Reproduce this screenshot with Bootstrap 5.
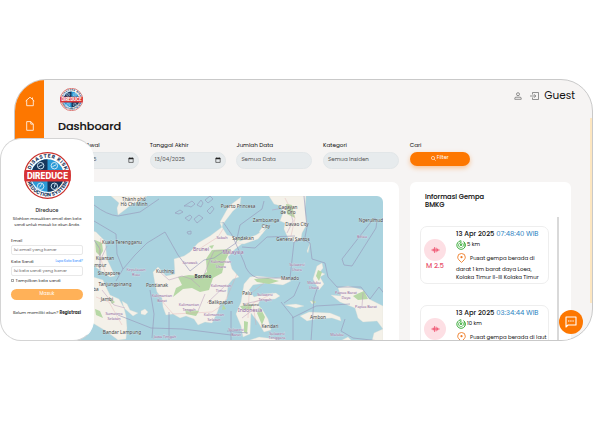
<!DOCTYPE html>
<html lang="id">
<head>
<meta charset="utf-8">
<meta name="viewport" content="width=device-width, initial-scale=1">
<title>Direduce Dashboard</title>
<link href="https://cdn.jsdelivr.net/npm/bootstrap@5.3.0/dist/css/bootstrap.min.css" rel="stylesheet">
<style>
body{font-family:Poppins,Inter,"Open Sans",sans-serif;color:#111;background:#fff;height:421px;padding-top:79px;font-size:6px;line-height:1.3;overflow:hidden}
svg{display:block;flex:none}
.shell{margin-left:14px;width:579px;height:262px;border:1px solid #c9c9c9;border-radius:32px;background:linear-gradient(#fde6c0,#fde6c0) right 38px/2px 185px no-repeat #f6f4f3}
.side{width:29px;background:#fd7700;padding-top:16px;gap:14px}
.main{padding-left:14px}
.topbar{height:36px;padding:4px 17px 0 2px}
.guest{font-size:10.500px;line-height:14px;margin-left:1px}
.title{font-size:11.300px;font-weight:500;letter-spacing:-.05px;line-height:18px;margin:1px 0 6px 0;-webkit-text-stroke:.15px #111}
.filters{display:grid;grid-template-columns:repeat(5,76px);column-gap:10.7px;margin-left:5px;height:41px}
.lbl{font-size:5.7px;line-height:9px;margin-bottom:1.5px;white-space:nowrap}
.first-lbl{margin-left:-2px}
.pill{height:17px;border-radius:9px;background:#e7ebed;border:1px solid #e2e6e8;font-size:5.5px;color:#555;padding:0 4px}
.pill .early{margin-left:-2px}
.filter-btn{width:60px;height:14px;margin-top:1px;border-radius:7px;background:#fd7700;color:#fff;font-size:5px;box-shadow:0 2px 5px #fd770066;gap:1px}
.panels{margin-left:5px;height:159px;gap:11px}
.map-panel{width:336px;border-radius:7px 7px 0 0;background:#fff;padding:14px 16px 0 10px}
.map-art{width:310px;height:145px;border-radius:6px 6px 0 0}
.info{width:161px;border-radius:6px 6px 0 0;background:#fff;padding:11px 12px 0 10px}
.info-title{font-size:6.7px;font-weight:500;line-height:8px;padding-left:5px;height:24px;-webkit-text-stroke:.1px #111}
.feed{border-right:2px solid #d9d9d9;padding:9px 8px 0 0;gap:21px;height:124px;overflow:hidden}
.quake{width:129px;height:58px;flex:none;border:1px solid #eee;border-radius:7px;padding:2px 0 0 2px}
.mag{width:24px;flex:none;padding-top:10px;font-size:7px;font-weight:500;color:#e8506b;white-space:nowrap}
.wave{width:22px;height:22px;border-radius:50%;background:#fddfe4;margin-bottom:3px}
.mag b{font-weight:500;position:relative;margin-top:-3px}
.detail{padding-left:9px;white-space:nowrap}
.when{font-size:6.8px;font-weight:500;line-height:9px}
.when span{color:#2982bf;font-weight:400}
.depth{font-size:5.4px;height:13px;gap:1px}
.place{font-size:5.45px;line-height:8px}
.place div:first-child{height:14px;gap:4px;padding-left:1px}
.login{left:0;top:138px;width:94px;height:203px;border-radius:21px;background:#fff;border:1px solid #d4d4d4;border-right-color:#fff;padding:13px 10px;font-size:4.200px;color:#333}
.brand{font-size:5.1px;font-weight:500;line-height:8px;margin-top:8px}
.intro{font-size:3.92px;line-height:6px;height:20px;white-space:nowrap;margin-top:1px}
.field{height:10px;border:1px solid #e8e8e8;border-radius:2px;padding-left:2px;font-size:4.2px;color:#666}
.flabel{font-size:4.2px;line-height:9px}
.flabel.second{margin-top:1.5px}
.forgot{font-size:3.2px;color:#2485ff}
.check{width:3px;height:3px;flex:none;border:1px solid #aaa}
.tick{gap:1.500px}
.submit{height:11px;border-radius:6px;background:#ffb158;color:#fff;font-size:4.6px;margin-top:4px}
.register{margin-top:10px}
.chat{left:559px;top:310px;width:24px;height:24px;background:#fd7700}
</style>
<script src="https://cdn.jsdelivr.net/npm/bootstrap@5.3.0/dist/js/bootstrap.bundle.min.js"></script>
</head>
<body>
<svg width="0" height="0" class="position-absolute"><defs>
<symbol id="logo" viewBox="0 0 48 48"><circle cx="24" cy="24" r="23.3" fill="#fff" stroke="#c9302c" stroke-width="1.3"/><circle cx="24" cy="24" r="16.6" fill="#2a9ad6"/><path d="M24 7.4A16.6 16.6 0 0 0 7.4 24H24zM24 24v16.6A16.6 16.6 0 0 0 40.6 24z" fill="#17375d"/><g fill="none" stroke="#cfe6f5"><circle cx="17" cy="14" r="3.3"/><circle cx="31" cy="14" r="3.3"/><circle cx="17" cy="35" r="3.3"/><circle cx="31" cy="35" r="3.3"/><path d="m15 15 4-2m10 2 4-2m-17 23 2-3m13 3 1-4"/></g><path id="arcT" d="M5.700 24a18.300 18.300 0 0 1 36.600 0" fill="none"/><path id="arcB" d="M2.600 24a21.400 21.400 0 0 0 42.800 0" fill="none"/><g font-family="Inter,sans-serif" font-weight="800" font-size="5" fill="#17375d"><text><textPath href="#arcT" startOffset="6" textLength="46">DISASTER RISK</textPath></text><text><textPath href="#arcB" startOffset="7" textLength="53">REDUCTION SYSTEM</textPath></text></g><rect x=".5" y="18.5" width="47" height="11.5" rx="1" fill="#d83235"/><text x="24" y="27.4" font-family="Inter,sans-serif" font-weight="800" font-size="8.6" text-anchor="middle" textLength="42" lengthAdjust="spacingAndGlyphs" fill="#fff">DIREDUCE</text></symbol>
<symbol id="cal" viewBox="0 0 6 6"><path d="M.8 1.1h4.400v4.300H.8zM1.800.3v1M4.200.3v1" fill="none" stroke="#222" stroke-width=".6"/><path d="M.8 1h4.400v1.200H.8z" fill="#222"/></symbol>
<symbol id="quakewave" viewBox="0 0 10 8"><path d="M.5 4h9M2.500 2.500v3M4 .8v6.400M5.700 1.500v5M7.300 2.500v3" fill="none" stroke="#ef5470" stroke-width="1"/></symbol>
<symbol id="radar" viewBox="0 0 10 10"><g fill="none" stroke="#28a428" stroke-linecap="round"><path d="M7.800 1.700A4.300 4.300 0 1 1 4.500.8" stroke-width=".9"/><path d="M6.700 3.200A2.500 2.500 0 1 1 4.500 2.600M5 5V1M8.500 3A4.300 4.300 0 0 1 9 6" stroke-width=".7"/></g><circle cx="5" cy="5" r=".9" fill="#28a428"/></symbol>
<symbol id="pin" viewBox="0 0 9 10"><path d="M4.500 9.400C2.500 7.600.7 6 .7 4.200a3.800 3.700 0 0 1 7.600 0C8.300 6 6.500 7.600 4.500 9.400z" fill="none" stroke="#ee7b24" stroke-width=".9"/><circle cx="4.500" cy="4.200" r="1.100" fill="#ee7b24"/></symbol>
</defs></svg>

<div class="shell d-flex overflow-hidden">
  <nav class="side d-flex flex-column align-items-center">
    <svg width="10" height="11" viewBox="0 0 10 11" fill="none" stroke="#fff" stroke-width=".8"><path d="M.7 5 5 1.200 9.300 5M1.700 4.200v5.500h6.600V4.200M7.500 3V1.500"/></svg>
    <svg width="8" height="10" viewBox="0 0 8 10" fill="none" stroke="#fff" stroke-width=".8" stroke-linejoin="round"><path d="M.7.6h4.100l2.500 2.500v6.200H.7zM4.800.6v2.500h2.500"/></svg>
  </nav>
  <main class="main flex-grow-1">
    <header class="topbar d-flex justify-content-between">
      <svg width="23" height="23" class="mt-1 ms-0"><use href="#logo" width="23" height="23"/></svg>
      <div class="d-flex align-items-center h-50 pt-2">
        <svg width="8" height="8" viewBox="0 0 8 8" fill="none" stroke="#666" stroke-width=".7" class="me-2"><circle cx="4" cy="2.200" r="1.500"/><path d="M.8 7.300V6.200q0-1 1.200-1h4q1.200 0 1.200 1v1.100z"/></svg>
        <svg width="9" height="8" viewBox="0 0 9 8" fill="none" stroke="#666" stroke-width=".7" class="me-1"><path d="M2.500 2.500V.5h6v7h-6v-2M0 4h5.700M4 2.200 5.800 4 4 5.800"/></svg>
        <span class="guest">Guest</span>
      </div>
    </header>
    <h1 class="title">Dashboard</h1>
    <div class="filters">
      <div><div class="lbl first-lbl">Tanggal Awal</div><div class="pill d-flex align-items-center justify-content-between"><span class="early">13/04/2025</span><svg width="6" height="6"><use href="#cal"/></svg></div></div>
      <div><div class="lbl">Tanggal Akhir</div><div class="pill d-flex align-items-center justify-content-between"><span>13/04/2025</span><svg width="6" height="6"><use href="#cal"/></svg></div></div>
      <div><div class="lbl">Jumlah Data</div><div class="pill d-flex align-items-center">Semua Data</div></div>
      <div><div class="lbl">Kategori</div><div class="pill d-flex align-items-center">Semua Insiden</div></div>
      <div><div class="lbl">Cari</div><div class="filter-btn d-flex align-items-center justify-content-center"><svg width="5" height="5" viewBox="0 0 5 5" fill="none" stroke="#fff" stroke-width=".6"><circle cx="2" cy="2" r="1.600"/><path d="m3.200 3.200 1.500 1.500"/></svg>Filter</div></div>
    </div>
    <div class="panels d-flex">
      <section class="map-panel">
        <svg class="map-art" viewBox="73 196 310 145" font-family="'Noto Sans',sans-serif" font-size="4.700">
          <path fill="#aad3df" d="M73 196h310v145H73z"/>
          <g fill="#f4f1e9" stroke="#d9dcd2" stroke-width=".3" stroke-linejoin="round">
            <path d="M111 196h36l-6 5-9 3-6 5-8 6-1-7 2-5z"/>
            <path d="m90 230 6 2 9 9 2 18 8 17-5 1-9-6-11-8z"/>
            <path d="m90 276 13 4 3 7 4 8 9 4 5 9 2 8 1 12-1 11-8 1-12-9-15-9z"/>
            <path d="m122 301 5 3 3 6 8 3-5 3-9-8zm19 10 4-2 3 3-3 3-4-1z"/>
            <path d="m222 227 5 8 8 2 5 4 3 2-9 7-6 7 2 5 2 7 7 8-6 2-5 6-1 14-7 6-3 8-5 10-7-1-7 3-4-6-8-3-6 2-7-4-7 1-3-8-1-9-5-6-2-8-2-12 5-5 8 9 9-2-1-15 10-3 6-4 8-9 12-7z"/>
            <path d="m241 197-12 9-9 16 3 2 10-13 7-6zm-19 31-2-5 3-1z"/>
            <path d="m269 196 5 8 7 2 2 7-3 8 5 2-1 6 4 9 6 4 7-3 1-6 5-9-2-15 1-13zm-3 29-4 9-3-2 4-6z"/>
            <path d="m236 243 7-3 13-5 11-7-9 11-14 5z"/>
            <path d="m244 284 6-7 6-1 20 2 10-1 5 4-8 4-17-2-13 2-4 5 5 7 10-3 12-1 4 3-5 3-15 1-2 5 4 4 6 10 3 11-7 2-6-10-7-9-1 21-7 3-2-11-5-12 5-12z"/>
            <path d="m313 279 4-13 5-3 1 5-3 4 5 2-5 3 4 7-5 6zm-28 26 11-1 8 2-8 2zm25-4 6 1-4 2zM307 251l3-8-2 10z"/>
            <path d="m300 316 9-4 21 1 10 4 1 4-9-3-17 1-8 2z"/>
            <path d="m338 288 10-2 15 4 6 9 14 7v23l-6-8-14 1-5-4-3-10-15-6-9-7 10 1z"/>
            <path d="m372 341 2-8 9-4v12zm-125 0 12-4 16 2 2 2zm93 0 8-4 4 4z"/>
          </g>
          <g fill="#b7d8a6">
            <path d="m212 250 19-1-6 12-3 12-9 5-4 12-9 2-8-4-9 1-10 8 3-9 6-3-4-8 11-2 12 1 6-4-1-13z"/>
            <path d="m95 240 7 3 1 8-3 5-4-4zm0 69 5 2 3 7-7-3zm14-11 6 4-3 2zm76 11 14 2-3 5-10-2zm24-63 5-1-2 4zm14 58 3 5-4 1zM254 279l14-1 11 3-10 3-12-2zm6 28 5 10-3 8-5-12zm-16 14 4 1-1 12-3-2zm74-51 4 2-3 9-3-5zm39 24 7-3 4 8-10 1-5-4zM286 204l6 1 3 13-8-4zm-49 34 6-1-7 5zM240 306l12-1-1 5h-8zM312 300l4 2-3 2z"/>
          </g>
          <g fill="none" stroke="#9899bb" stroke-width=".65">
            <path d="M94 205q13 10 24 11l22-4 19-13M94 221l22 13 1 20 6 15 12-14 12-12 18-11 13 23 12 16 14-11 10-2 22-15 4-18 22-16 2-8M123 269l-7 12M223 222l9 13 12 27q3 13 14 16h32l4-36 9-3 7 4 2 16 13 4 3 14 9 10h24l9 12 9-12 7 9"/>
            <path d="m374 218-32 41 2 6 8 1 24-38 1-8zM304 196l3 31-3 15M242 247l13 1 12-11 28-1M150 290l4 24-2 24M169 341v-29M231 341v-30m-4 20 21 2M284 303l10-7 6-14M293 341v-24l-12-15M292 318l24-12 34-2M118 315l33 13 32 1 48 6M318 286l-4 12-3 43M345 319l-4 12 12 7 27 3M94 240l6 9v21"/>
            <path d="m175 213 5-3 3 2-4 2zm9-7 8-5 3 3-4 3-3-1zm1 12 5-3 2 2-3 4zm9 1 5-4 4 3-6 5zm3-14 4-5 2 3-2 4zm8-5 5-4 3 3-5 4zm2 11 5-5 2 3-4 5zm-20 21 4-1v3h-3z"/>
          </g>
          <path d="M160 272l9 8 13-4 9 3 12-1 6-16 5-11 17-1M191 279l9 8M205 294l-7 17M207 303l19-18M102 290l12 15 11 3M242 318l12-9m-10-5 18-4m101-7-1 13M107 246l-7 15M272 210l17-3 4 14-6 12" fill="none" stroke="#b99bbd" stroke-width=".5"/>
          <path d="m101 238-2 15 6 19M96 297l13 5 13 23m74-74 22-14 5-8m-67 65 17 20 39-2 12-8 13-30M248 318l1-23 15-12m-8 42-3-22 15-7M285 198l10 20-4 18" fill="none" stroke="#e1a2a8" stroke-width=".35"/>
          <g fill="#3f4245" text-anchor="middle" stroke="#f5f5f0" stroke-opacity=".6" stroke-width=".5" paint-order="stroke">
            <text x="134" y="200.500">Thành phố</text><text x="134" y="206">Hồ Chí Minh</text><text x="122" y="244">Kuala Terengganu</text><text x="105" y="260">Kuantan</text><text x="99" y="267">umpur</text><text x="109" y="275">Singapore</text><text x="115" y="286">Tanjungpinang</text><text x="96" y="291">ba</text><text x="107" y="301">Jambi</text><text x="122" y="333.500">Bandar Lampung</text><text x="165" y="273">Kuching</text><text x="157" y="287">Pontianak</text><text x="203" y="277.500" font-weight="bold">Borneo</text><text x="221" y="303.500">Balikpapan</text><text x="238" y="208">Puerto Princesa</text><text x="288" y="208.500">Cagayan</text><text x="288" y="214">de Oro</text><text x="266" y="222">Zamboanga</text><text x="266" y="227.500">City</text><text x="297" y="226">Davao City</text><text x="293" y="240.500">General Santos</text><text x="243" y="239.500">Sandakan</text><text x="290" y="280">Manado</text><text x="247" y="294.500">Palu</text><text x="251" y="305.500" font-size="4">Sulawesi</text><text x="318" y="318.500">Ambon</text><text x="270" y="327.500">Kendari</text><text x="371" y="221.500" font-size="4.500">Ngerulmud</text>
          </g>
          <g fill="#8d6699" text-anchor="middle" font-size="3.800" stroke="#f6f1f4" stroke-opacity=".7" stroke-width=".5" paint-order="stroke">
            <text x="201" y="250.500" font-size="5.200">Brunei</text><text x="233" y="253.500" font-size="5.200">Malaysia</text><text x="250" y="311.500" font-size="5.200">Indonesia</text><text x="222" y="239">Sabah</text><text x="190" y="264">Sarawak</text><text x="221" y="263">Kalimantan</text><text x="221" y="268">Utara</text><text x="136" y="271">Kepulauan</text><text x="136" y="276">Riau</text><text x="162" y="297">Kalimantan</text><text x="162" y="302">Barat</text><text x="189" y="306">Kalimantan</text><text x="189" y="311">Tengah</text><text x="221" y="287">Kalimantan</text><text x="221" y="292">Timur</text><text x="214" y="315.500">Kalimantan</text><text x="214" y="320.500">Selatan</text><text x="114" y="315">Sumatera</text><text x="114" y="320">Selatan</text><text x="165" y="338">Jawa Tengah</text><text x="236" y="331">Sulawesi</text><text x="236" y="336">Barat</text><text x="297" y="266">Sulawesi</text><text x="297" y="271">Utara</text><text x="265" y="296">Sulawesi</text><text x="265" y="301">Tengah</text><text x="277" y="334.500">Sulawesi</text><text x="277" y="339.200">Tenggara</text><text x="314" y="284">Maluku</text><text x="314" y="289">Utara</text><text x="362" y="238">Belau</text><text x="346" y="294">Papua Barat</text><text x="346" y="299">Daya</text><text x="366" y="308">Papua Barat</text><text x="337" y="336">Maluku</text>
          </g>
        </svg>
      </section>
      <section class="info">
        <div class="info-title">Informasi Gempa<br>BMKG</div>
        <div class="feed d-flex flex-column">
          <article class="quake d-flex">
            <div class="mag d-flex flex-column align-items-center"><div class="wave d-flex align-items-center justify-content-center"><svg width="9" height="8"><use href="#quakewave"/></svg></div><b>M 2.5</b></div>
            <div class="detail"><div class="when">13 Apr 2025 <span>07:48:40 WIB</span></div><div class="depth d-flex align-items-center"><svg width="10" height="10"><use href="#radar"/></svg>5 km</div><div class="place"><div class="d-flex align-items-center"><svg width="9" height="10"><use href="#pin"/></svg>Pusat gempa berada di</div>darat 1 km barat daya Loea,<br>Kolaka Timur II-III Kolaka Timur</div></div>
          </article>
          <article class="quake d-flex">
            <div class="mag d-flex flex-column align-items-center"><div class="wave d-flex align-items-center justify-content-center"><svg width="9" height="8"><use href="#quakewave"/></svg></div></div>
            <div class="detail"><div class="when">13 Apr 2025 <span>03:34:44 WIB</span></div><div class="depth d-flex align-items-center"><svg width="10" height="10"><use href="#radar"/></svg>10 km</div><div class="place"><div class="d-flex align-items-center"><svg width="9" height="10"><use href="#pin"/></svg>Pusat gempa berada di laut</div></div></div>
          </article>
        </div>
      </section>
    </div>
  </main>
</div>

<section class="login position-absolute">
  <svg width="47" height="47" class="mx-auto"><use href="#logo" width="47" height="47"/></svg>
  <div class="brand text-center">Direduce</div>
  <div class="intro d-flex flex-column align-items-center"><span>Silahkan masukkan email dan kata</span><span>sandi untuk masuk ke akun Anda.</span></div>
  <div class="flabel">Email</div>
  <div class="field d-flex align-items-center">Isi email yang benar</div>
  <div class="flabel second d-flex justify-content-between"><span>Kata Sandi</span><span class="forgot">Lupa Kata Sandi?</span></div>
  <div class="field d-flex align-items-center">Isi kata sandi yang benar</div>
  <div class="flabel tick d-flex align-items-center"><span class="check"></span>Tampilkan kata sandi</div>
  <div class="submit d-flex align-items-center justify-content-center">Masuk</div>
  <div class="text-center text-nowrap register">Belum memiliki akun? <b>Registrasi</b></div>
</section>
<div class="chat position-absolute rounded-circle d-flex align-items-center justify-content-center"><svg width="12" height="12" viewBox="0 0 12 12" fill="none" stroke="#fff" stroke-width="1.100"><path d="M1 11V1h10v8H3z" stroke-linejoin="round"/><path d="M3 5h6" stroke-dasharray="1.400 .8"/></svg></div>
</body>
</html>
